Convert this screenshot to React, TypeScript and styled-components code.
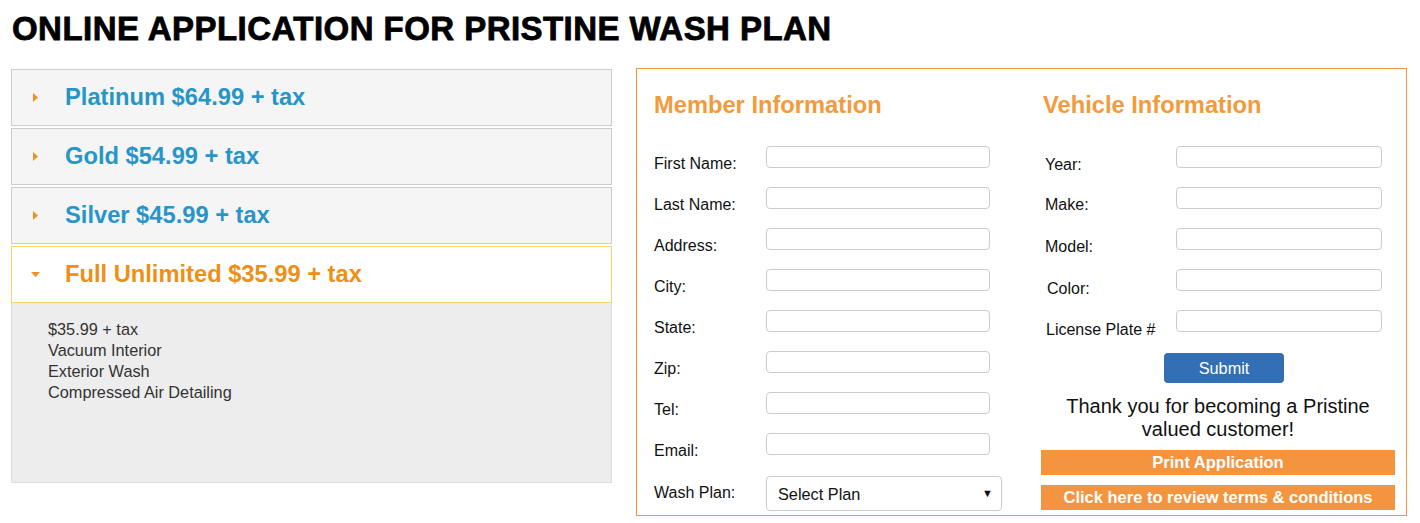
import React, { useState } from 'react';
import styled, { createGlobalStyle } from 'styled-components';

const orange = '#f4963f';
const blueText = '#2795c8';

const GlobalStyle = createGlobalStyle`
  body {
    margin: 0;
    background: #fff;
    font-family: "Liberation Sans", Arial, sans-serif;
    color: #111;
  }
`;

const Page = styled.div`
  padding: 0 13px 0 11px;
`;

const Title = styled.h1`
  margin: 0;
  padding: 11px 0 0 1px;
  height: 68px;
  box-sizing: border-box;
  font-size: 33px;
  line-height: 36px;
  font-weight: 900;
  letter-spacing: 0.45px;
  -webkit-text-stroke: 0.8px #000;
  color: #000;
`;

const Columns = styled.div`
  display: flex;
  align-items: flex-start;
  gap: 24px;
`;

const Accordion = styled.div`
  width: 601px;
  flex: none;
  margin-top: 1px;
  display: flex;
  flex-direction: column;
`;

const Header = styled.button<{ $active: boolean }>`
  display: flex;
  align-items: center;
  height: 57px;
  margin-top: 2px;
  &:first-child { margin-top: 0; }
  padding: 0 0 0 19px;
  box-sizing: border-box;
  border: 1px solid ${p => (p.$active ? '#f8d569' : '#cccccc')};
  background: ${p => (p.$active ? '#ffffff' : '#f5f5f5')};
  color: ${p => (p.$active ? '#ee8f16' : blueText)};
  font-family: "Liberation Sans", Arial, sans-serif;
  font-size: 23.7px;
  font-weight: bold;
  text-align: left;
  cursor: pointer;
`;

const Caret = styled.span`
  width: 9px;
  margin-right: 25px;
  display: flex;
  align-items: center;
  justify-content: center;
  svg { display: block; }
`;

const Panel = styled.div`
  height: 180px;
  box-sizing: border-box;
  padding: 16px 36px;
  background: #ededed;
  border: 1px solid #dddddd;
  border-top: none;
  color: #333;
  font-size: 16.3px;
  line-height: 21px;
`;

const FormBox = styled.div`
  flex: 1;
  height: 448px;
  box-sizing: border-box;
  border: 1px solid ${orange};
  padding: 0 11px 0 17px;
  display: grid;
  grid-template-columns: 387px 1fr;
`;

const Col = styled.div`
  display: flex;
  flex-direction: column;
`;

const Heading = styled.h2<{ $indent?: number }>`
  margin: 23px 0 28px ${p => p.$indent ?? 0}px;
  font-size: 23.7px;
  line-height: 26px;
  font-weight: bold;
  color: #f39a3c;
`;

const Row = styled.div<{ $labelWidth: number; $height: number; $indent?: number; $labelTop?: number }>`
  display: flex;
  align-items: flex-start;
  height: ${p => p.$height}px;
  padding-left: ${p => p.$indent ?? 0}px;
  label {
    width: ${p => p.$labelWidth}px;
    flex: none;
    padding-top: ${p => p.$labelTop ?? 9}px;
    font-size: 16px;
    line-height: 18px;
    color: #111;
  }
`;

const TextInput = styled.input<{ $width: number }>`
  width: ${p => p.$width}px;
  height: 22px;
  box-sizing: border-box;
  border: 1px solid #cccccc;
  border-radius: 4px;
  padding: 0 6px;
  font-family: "Liberation Sans", Arial, sans-serif;
  font-size: 14px;
`;

const SelectBox = styled.div`
  position: relative;
  width: 236px;
  height: 35px;
  select {
    width: 100%;
    height: 100%;
    appearance: none;
    -webkit-appearance: none;
    border: 1px solid #cccccc;
    border-radius: 4px;
    background: #fff;
    padding: 0 0 0 11px;
    font-family: "Liberation Sans", Arial, sans-serif;
    font-size: 16.3px;
    color: #111;
  }
  span {
    position: absolute;
    right: 9px;
    top: 11px;
    font-size: 11px;
    color: #111;
    pointer-events: none;
  }
`;

const Submit = styled.button`
  align-self: center;
  margin: 2px 0 0 12px;
  width: 120px;
  height: 30px;
  border: none;
  border-radius: 4px;
  background: #336fb5;
  color: #fff;
  font-family: "Liberation Sans", Arial, sans-serif;
  font-size: 16.3px;
`;

const Thanks = styled.p`
  margin: 12px 0 9px;
  text-align: center;
  font-size: 20px;
  line-height: 23px;
  color: #111;
`;

const OrangeBar = styled.a`
  display: block;
  height: 25px;
  line-height: 24px;
  margin-bottom: 10px;
  background: #f4943f;
  color: #fff;
  text-align: center;
  font-size: 16.5px;
  font-weight: bold;
  text-decoration: none;
  cursor: pointer;
`;

const plans = [
  { name: 'Platinum $64.99 + tax', items: ['$64.99 + tax'] },
  { name: 'Gold $54.99 + tax', items: ['$54.99 + tax'] },
  { name: 'Silver $45.99 + tax', items: ['$45.99 + tax'] },
  {
    name: 'Full Unlimited $35.99 + tax',
    items: ['$35.99 + tax', 'Vacuum Interior', 'Exterior Wash', 'Compressed Air Detailing'],
  },
];

const memberFields = ['First Name:', 'Last Name:', 'Address:', 'City:', 'State:', 'Zip:', 'Tel:', 'Email:'];
const vehicleFields = [
  { label: 'Year:', top: 10 },
  { label: 'Make:', top: 9 },
  { label: 'Model:', top: 10 },
  { label: 'Color:', top: 11, indent: 6 },
  { label: 'License Plate #', top: 11, indent: 5 },
];

const App = () => {
  const [open, setOpen] = useState(3);

  return (
    <Page>
      <GlobalStyle />
      <Title>ONLINE APPLICATION FOR PRISTINE WASH PLAN</Title>
      <Columns>
        <Accordion>
          {plans.map((plan, i) => (
            <React.Fragment key={plan.name}>
              <Header $active={open === i} onClick={() => setOpen(i)}>
                <Caret>
                  {open === i ? (
                    <svg width="9" height="5" viewBox="0 0 9 5"><path d="M0 0h9L4.5 5z" fill="#f0901d" /></svg>
                  ) : (
                    <svg width="5" height="9" viewBox="0 0 5 9"><path d="M0 0l5 4.5L0 9z" fill="#f0901d" /></svg>
                  )}
                </Caret>
                {plan.name}
              </Header>
              {open === i && (
                <Panel>
                  {plan.items.map(item => (
                    <div key={item}>{item}</div>
                  ))}
                </Panel>
              )}
            </React.Fragment>
          ))}
        </Accordion>

        <FormBox>
          <Col>
            <Heading>Member Information</Heading>
            {memberFields.map(f => (
              <Row key={f} $labelWidth={112} $height={f === 'Email:' ? 43 : 41}>
                <label>{f}</label>
                <TextInput $width={224} />
              </Row>
            ))}
            <Row $labelWidth={112} $height={35} $labelTop={8}>
              <label>Wash Plan:</label>
              <SelectBox>
                <select defaultValue="">
                  <option value="">Select Plan</option>
                  {plans.map(p => (
                    <option key={p.name}>{p.name}</option>
                  ))}
                </select>
                <span>▼</span>
              </SelectBox>
            </Row>
          </Col>

          <Col>
            <Heading $indent={2}>Vehicle Information</Heading>
            {vehicleFields.map(f => (
              <Row
                key={f.label}
                $labelWidth={135 - (f.indent ?? 4)}
                $height={41}
                $indent={f.indent ?? 4}
                $labelTop={f.top}
              >
                <label>{f.label}</label>
                <TextInput $width={206} />
              </Row>
            ))}
            <Submit>Submit</Submit>
            <Thanks>
              Thank you for becoming a Pristine
              <br />
              valued customer!
            </Thanks>
            <OrangeBar>Print Application</OrangeBar>
            <OrangeBar>Click here to review terms &amp; conditions</OrangeBar>
          </Col>
        </FormBox>
      </Columns>
    </Page>
  );
};

export default App;
